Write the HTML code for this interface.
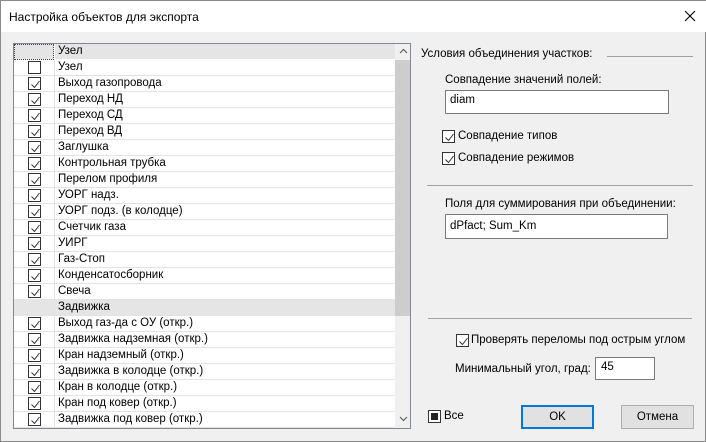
<!DOCTYPE html>
<html><head><meta charset="utf-8"><style>
*{margin:0;padding:0;box-sizing:border-box}
body{width:706px;height:442px;background:#f0f0f0;font-family:"Liberation Sans","Noto Sans CJK SC",sans-serif;font-size:11.5px;color:#000;position:relative;overflow:hidden;border:1px solid #8a8a8a}
.a{position:absolute;white-space:nowrap}
.cb{position:absolute;width:13px;height:13px;border:1px solid #333;background:#fff}
.cb svg{position:absolute;left:1px;top:1px}
.inp{position:absolute;background:#fff;border:1px solid #7a7a7a;padding:3px 0 0 4px}
.row{position:absolute;left:0;width:381px;height:16px;border-bottom:1px solid #e3e3e3;background:#fff}
.row .t{position:absolute;left:44px;top:1px}
.row .cb{left:14px;top:1px}
.row .sep{position:absolute;left:40px;top:0;width:1px;height:16px;background:#e3e3e3}
</style></head><body>
<div class="a" style="left:0;top:0;width:706px;height:31px;background:#fff"></div>
<div class="a" style="left:8px;top:9px;font-size:12px">Настройка объектов для экспорта</div>
<svg class="a" style="left:683px;top:9px" width="12" height="12"><path d="M1 1L11 11M11 1L1 11" stroke="#000" stroke-width="1.1"/></svg>

<div class="a" style="left:12px;top:42px;width:398px;height:386px;border:1px solid #828790;background:#fff;overflow:hidden">
 <div class="row" style="top:0;background:#e5e5e5;border-bottom:1px solid #fff"><div class="sep" style="background:#fff"></div><div class="t">Узел</div>
  <div class="a" style="left:0;top:0;width:40px;height:16px;border:1px dotted #444"></div></div>
 <div id="rows"></div>
 <div class="a" style="left:381px;top:0;width:16px;height:384px;background:#f0f0f0"></div>
 <div class="a" style="left:381px;top:16px;width:16px;height:256px;background:#cdcdcd"></div>
 <svg class="a" style="left:385px;top:4px" width="9" height="6"><path d="M1 5L4.5 1.5L8 5" stroke="#606060" fill="none" stroke-width="1.2"/></svg>
 <svg class="a" style="left:385px;top:372px" width="9" height="6"><path d="M1 1L4.5 4.5L8 1" stroke="#606060" fill="none" stroke-width="1.2"/></svg>
</div>

<div class="a" style="left:420px;top:47px">Условия объединения участков:</div>
<div class="a" style="left:606px;top:55px;width:86px;height:1px;background:#a0a0a0"></div>
<div class="a" style="left:444px;top:73px">Совпадение значений полей:</div>
<div class="inp" style="left:444px;top:89px;width:224px;height:24px">diam</div>
<div class="cb" style="left:441px;top:129px"><svg width="11" height="11"><path d="M1.5 5.5L4.5 8.5L9.5 2" stroke="#333" fill="none"/></svg></div>
<div class="a" style="left:457px;top:129px">Совпадение типов</div>
<div class="cb" style="left:441px;top:151px"><svg width="11" height="11"><path d="M1.5 5.5L4.5 8.5L9.5 2" stroke="#333" fill="none"/></svg></div>
<div class="a" style="left:457px;top:151px">Совпадение режимов</div>
<div class="a" style="left:426px;top:184px;width:266px;height:1px;background:#a0a0a0"></div>
<div class="a" style="left:444px;top:197px">Поля для суммирования при объединении:</div>
<div class="inp" style="left:444px;top:213px;width:223px;height:25px;padding-top:5px">dPfact; Sum_Km</div>
<div class="a" style="left:427px;top:317px;width:264px;height:1px;background:#a0a0a0"></div>
<div class="cb" style="left:455px;top:333px"><svg width="11" height="11"><path d="M1.5 5.5L4.5 8.5L9.5 2" stroke="#333" fill="none"/></svg></div>
<div class="a" style="left:470px;top:333px">Проверять переломы под острым углом</div>
<div class="a" style="left:454px;top:362px">Минимальный угол, град:</div>
<div class="inp" style="left:594px;top:356px;width:60px;height:23px;padding-left:5px">45</div>
<div class="cb" style="left:427px;top:409px"><div style="position:absolute;left:2px;top:2px;width:7px;height:7px;background:#222"></div></div>
<div class="a" style="left:443px;top:409px">Все</div>
<div class="a" style="left:520px;top:404px;width:73px;height:24px;border:2px solid #0078d7;background:#e1e1e1;text-align:center;line-height:20px">OK</div>
<div class="a" style="left:620px;top:404px;width:73px;height:24px;border:1px solid #adadad;background:#e1e1e1;text-align:center;line-height:22px">Отмена</div>
<script>
var n=["Узел","Выход газопровода","Переход НД","Переход СД","Переход ВД","Заглушка","Контрольная трубка","Перелом профиля","УОРГ надз.","УОРГ подз. (в колодце)","Счетчик газа","УИРГ","Газ-Стоп","Конденсатосборник","Свеча","Задвижка","Выход газ-да с ОУ (откр.)","Задвижка надземная (откр.)","Кран надземный (откр.)","Задвижка в колодце (откр.)","Кран в колодце (откр.)","Кран под ковер (откр.)","Задвижка под ковер (откр.)"];
var h="";n.forEach(function(s,i){var g=i==15;h+='<div class="row" style="top:'+(16+i*16)+'px'+(g?';background:#e5e5e5':'')+'">'+(g?'':'<div class="sep"></div><div class="cb">'+(i>0?'<svg width="11" height="11"><path d="M1.5 5.5L4.5 8.5L9.5 2" stroke="#333" fill="none"/></svg>':'')+'</div>')+'<div class="t">'+s+'</div></div>';});
document.getElementById("rows").innerHTML=h;
</script>
</body></html>
